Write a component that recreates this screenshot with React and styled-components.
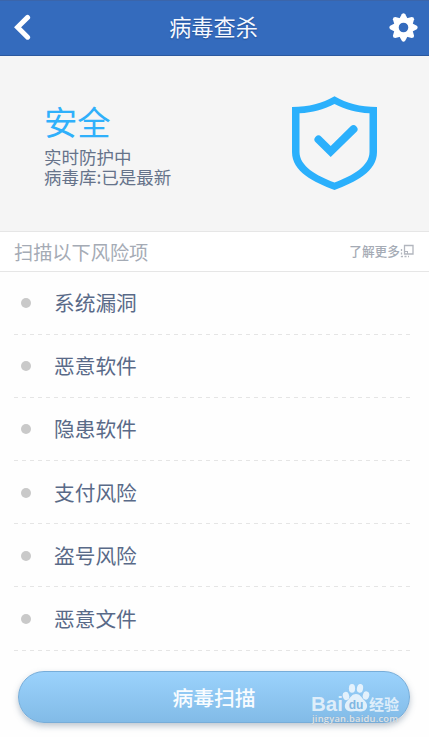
import React from 'react';
import styled, { createGlobalStyle } from 'styled-components';

const GlobalStyle = createGlobalStyle`
  * {
    box-sizing: border-box;
  }

  body {
    margin: 0;
    background: #fefefe;
    font-family: 'Noto Sans CJK SC', sans-serif;
  }
`;

const Screen = styled.div`
  display: flex;
  flex-direction: column;
  width: 429px;
  height: 737px;
  overflow: hidden;
`;

const Header = styled.header`
  display: flex;
  justify-content: space-between;
  align-items: center;
  height: 56px;
  padding: 0 11px 0 13px;
  background-color: #346bbd;
  border-bottom: 1px solid #2b589e;
  box-shadow: inset 0 1px 0 #3b65aa;
`;

const Title = styled.h1`
  margin: 0 0 3px 5px;
  color: #f4f8ff;
  font-size: 22.2px;
  font-weight: 400;
  line-height: 30px;
  text-shadow: 0 1px 1px #1f4b91;
`;

const IconButton = styled.button`
  display: flex;
  padding: 0;
  border: none;
  background: none;
`;

// Protection status panel
const Status = styled.section`
  display: flex;
  justify-content: space-between;
  height: 176px;
  padding: 40px 52px 0 44px;
  background-color: #f5f5f5;
  border-bottom: 1px solid #e6e6e6;
`;

const StatusTitle = styled.h2`
  margin: 3px 0 4px;
  color: #2fb0fb;
  font-size: 33.3px;
  font-weight: 400;
  line-height: 44px;
`;

const StatusText = styled.p`
  margin: 0;
  color: #66738a;
  font-size: 17.5px;
  line-height: 20px;
`;

const SectionHeader = styled.div`
  display: flex;
  justify-content: space-between;
  align-items: center;
  height: 40px;
  padding: 0 15px 0 14px;
  background-color: #fff;
  border-bottom: 1px solid #e6e6e6;
`;

const SectionTitle = styled.span`
  color: #a5abb5;
  font-size: 19.2px;
  line-height: 28px;
`;

const MoreLink = styled.span`
  display: flex;
  align-items: center;
  margin-bottom: 1px;
  color: #a5abb5;
  font-size: 12.7px;
  font-weight: 500;
  line-height: 20px;
`;

const RiskList = styled.ul`
  list-style: none;
  margin: -0.6px 0 0;
  padding: 0 19px 0 14px;
`;

const RiskItem = styled.li`
  display: flex;
  align-items: center;
  height: 63.2px;
  padding: 0 0 2px 7px;
  color: #596a88;
  font-size: 20.7px;
  line-height: 30px;
  background: repeating-linear-gradient(90deg, #e5e5e5 0 4px, transparent 4px 8px) left bottom / 100% 1px no-repeat;

  &::before {
    content: '';
    width: 10px;
    height: 10px;
    margin: 2px 23px 0 0;
    border-radius: 50%;
    background-color: #c9c9c9;
  }
`;

const Footer = styled.footer`
  position: relative;
  padding: 20.4px 18px 0;
`;

const ScanButton = styled.button`
  display: block;
  width: 392px;
  height: 52px;
  padding: 0;
  border: 1px solid #77add9;
  border-radius: 26px;
  background: linear-gradient(#9bd2fc, #82bbe7);
  box-shadow: 0 3px 6px rgba(70, 95, 120, 0.35);
  color: #f8fcff;
  font-family: inherit;
  font-size: 20.8px;
  font-weight: 500;
  line-height: 30px;
`;

const Watermark = styled.div`
  position: absolute;
  top: 32px;
  left: 311px;
  width: 92px;
  color: rgba(255, 255, 255, 0.72);
`;

const Brand = styled.div`
  display: flex;
  align-items: flex-end;
  height: 30px;
  font-family: 'Liberation Sans', sans-serif;
  font-size: 20.5px;
  font-weight: 700;
  line-height: 18px;
`;

const BrandName = styled.span`
  width: 31px;
`;

const BrandSuffix = styled.span`
  margin-left: -1px;
  font-family: 'Noto Sans CJK SC', sans-serif;
  font-size: 15px;
  line-height: 18px;
  white-space: nowrap;
`;

const Site = styled.div`
  padding-left: 1px;
  font-family: 'Open Sans', sans-serif;
  font-size: 9.4px;
  font-weight: 600;
  line-height: 12px;
  letter-spacing: 0.2px;
  text-shadow: 0 0 1px #8c9eae;
  white-space: nowrap;
`;

const risks = ['系统漏洞', '恶意软件', '隐患软件', '支付风险', '盗号风险', '恶意文件'];

const BackIcon = () => (
  <svg width="20" height="28" viewBox="0 0 20 28">
    <path d="M14.6 3.4 4.6 13.3 14.6 23.2" fill="none" stroke="#fff" strokeWidth="5" strokeLinecap="round" strokeLinejoin="miter" />
  </svg>
);

const GearIcon = () => (
  <svg width="29" height="29" viewBox="-14.5 -14.5 29 29">
    <g fill="#fff">
      {[0, 45, 90, 135, 180, 225, 270, 315].map((angle) => (
        <path key={angle} d="M-4.6-8-1.7-13.3Q0-15 1.7-13.3L4.6-8Z" transform={`rotate(${angle})`} />
      ))}
    </g>
    <circle r="7.2" fill="none" stroke="#fff" strokeWidth="4.8" />
  </svg>
);

const ShieldIcon = () => (
  <svg width="85" height="94" viewBox="0 0 85 94">
    <path
      d="M42.5.3C30 7.5 17 11 0 11V56C0 76 22 86 42.5 94 63 86 85 76 85 56V11C68 11 55 7.5 42.5.3ZM42.5 8C54 14 64 16.5 77.5 17.3V56C77.5 70 61 79.5 42.5 86.5 24 79.5 7.5 70 7.5 56V17.3C21 16.5 31 14 42.5 8Z"
      fill="#2bb0fc"
      fillRule="evenodd"
    />
    <path d="M26.5 43.5 38.7 55.5 61.5 33.2" fill="none" stroke="#2bb0fc" strokeWidth="8" strokeLinecap="round" />
  </svg>
);

const MoreIcon = () => (
  <svg width="14" height="14" viewBox="0 0 14 14" fill="none" stroke="#b2b6be">
    <path d="M4.5 1.5h8.5v8.5H4.5z" strokeWidth="1.3" />
    <path d="M1.5 5v7.5H9" strokeWidth="1.3" strokeDasharray="2 1.5" />
    <path d="M4 7.5h3.5M7.5 7v3" />
  </svg>
);

const PawIcon = () => (
  <svg width="28" height="30" viewBox="0 0 28 30" fill="rgba(255,255,255,.75)">
    <ellipse cx="4" cy="13" rx="3.2" ry="4.2" transform="rotate(-15 4 13)" />
    <ellipse cx="10" cy="5.4" rx="3.1" ry="4.4" />
    <ellipse cx="18" cy="5.4" rx="3.1" ry="4.4" transform="rotate(10 18 5.4)" />
    <ellipse cx="24" cy="12.5" rx="3.2" ry="4.2" transform="rotate(15 24 12.5)" />
    <path d="M14 11C18 11 19 14 22 17 25.5 20 26 24 23.8 26.5 21 29.5 17 28 14 28S7 29.5 4.2 26.5C2 24 2.5 20 6 17 9 14 10 11 14 11Z" />
    <text x="14" y="25.5" textAnchor="middle" fill="#80b7e2" fontFamily="Liberation Sans, sans-serif" fontSize="12" fontWeight="700">du</text>
  </svg>
);

const App = () => {
  return (
    <>
      <GlobalStyle />
      <Screen>
        <Header>
          <IconButton aria-label="返回"><BackIcon /></IconButton>
          <Title>病毒查杀</Title>
          <IconButton aria-label="设置"><GearIcon /></IconButton>
        </Header>
        <Status>
          <div>
            <StatusTitle>安全</StatusTitle>
            <StatusText>
              实时防护中
              <br />
              病毒库:已是最新
            </StatusText>
          </div>
          <ShieldIcon />
        </Status>
        <SectionHeader>
          <SectionTitle>扫描以下风险项</SectionTitle>
          <MoreLink>
            了解更多
            <MoreIcon />
          </MoreLink>
        </SectionHeader>
        <RiskList>
          {risks.map((risk) => (
            <RiskItem key={risk}>{risk}</RiskItem>
          ))}
        </RiskList>
        <Footer>
          <ScanButton>病毒扫描</ScanButton>
          {/* Brand mark lies over the right end of the button */}
          <Watermark>
            <Brand>
              <BrandName>Bai</BrandName>
              <PawIcon />
              <BrandSuffix>经验</BrandSuffix>
            </Brand>
            <Site>jingyan.baidu.com</Site>
          </Watermark>
        </Footer>
      </Screen>
    </>
  );
};

export default App;
